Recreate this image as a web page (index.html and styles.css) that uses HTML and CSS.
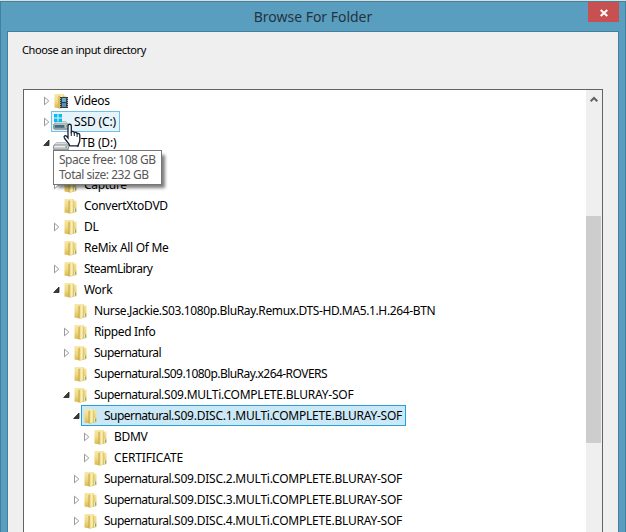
FILE: index.html
```
<!DOCTYPE html>
<html lang="en">
<head>
<meta charset="utf-8">
<title>Browse For Folder</title>
<link rel="stylesheet" href="styles.css">
</head>
<body>
<svg class="defs" aria-hidden="true">
  <linearGradient id="gold" x1="0" x2="0" y1="0" y2="1"><stop offset="0" stop-color="#f8e9a8"/><stop offset=".5" stop-color="#efd983"/><stop offset="1" stop-color="#d8b84c"/></linearGradient>
  <linearGradient id="flap" x1="0" x2="1"><stop offset="0" stop-color="#e6cb6c"/><stop offset=".6" stop-color="#fbf1c0"/><stop offset="1" stop-color="#e9d27b"/></linearGradient>
  <linearGradient id="metal" x1="0" x2="0" y1="0" y2="1"><stop offset="0" stop-color="#f4f4f4"/><stop offset="1" stop-color="#9fa3a6"/></linearGradient>
  <symbol id="folder" viewBox="0 0 16 16">
    <path d="M1.5 1h9v1.5h3V14l-6 1.5-6-1z" fill="url(#gold)"/>
    <path d="M6 2.5L10.5 1v13.3L6 15.5z" fill="url(#flap)"/>
    <path d="M6 3v12.3" stroke="#c5a23d" stroke-width=".9"/>
    <path d="M10.8 3v11" stroke="#d1b355" stroke-width=".6"/>
    <path d="M12.6 10.5v3" stroke="#4f9dab"/><path d="M11.7 10v4" stroke="#fff6c9" stroke-width=".8"/>
  </symbol>
  <symbol id="video" viewBox="0 0 16 16">
    <use href="#folder" width="16" height="16"/>
    <path d="M7 4h8v11H7z" fill="#343b42"/><path d="M9 5h4v4H9z" fill="#62aed2"/><path d="M9 10h4v4H9z" fill="#578fb3"/>
    <path d="M7.6 5v10M14.4 5v10" stroke="#c8cacb" stroke-width=".8" stroke-dasharray="1 1"/>
  </symbol>
  <symbol id="drive" viewBox="0 0 16 16">
    <path d="M3.5 7.5h9l3 3H.5z" fill="#d9dcde" stroke="#a2a6a8" stroke-width=".6"/>
    <rect x=".5" y="10" width="15" height="5.2" rx="1.5" fill="url(#metal)" stroke="#74797c" stroke-width=".8"/>
    <path d="M2 11.5h10" stroke="#eee"/><path d="M13.2 11v2" stroke="#4fa853"/>
  </symbol>
  <symbol id="system" viewBox="0 0 16 16">
    <use href="#drive" width="16" height="16"/><path d="M1.5 11h10v2.8h-10z" fill="#377182"/>
    <path d="M1 0h3.5v3.5H1zM5.5 0H9v3.5H5.5zM1 4.5h3.5V8H1zM5.5 4.5H9V8H5.5z" fill="#08baf2"/>
  </symbol>
  <symbol id="closed" viewBox="0 0 8 10"><path d="M1.5 1.2v7.6L5.8 5z" fill="#fff" stroke="#999"/></symbol>
  <symbol id="open" viewBox="0 0 8 10"><path d="M6 2v5.5H.7z" fill="#3b3b3b" stroke="#222" stroke-width=".8"/></symbol>
</svg>
<div class="dialog">
  <header class="titlebar"><h1>Browse For Folder</h1><button class="close" aria-label="Close"><svg width="8" height="8"><path d="M.7 1l6.6 6M7.3 1L.7 7" stroke="#fff" stroke-width="2"/></svg></button></header>
  <main class="panel">
    <p class="prompt">Choose an input directory</p>
    <div class="tree">
      <ul class="rows">
        <li class="row l0"><svg class="arrow"><use href="#closed"/></svg><span class="item"><svg class="icon"><use href="#video"/></svg><span class="t">Videos</span></span></li>
        <li class="row l0"><svg class="arrow"><use href="#closed"/></svg><span class="item hover"><svg class="icon"><use href="#system"/></svg><span class="t wide">SSD (C:)</span></span></li>
        <li class="row l0"><svg class="arrow"><use href="#open"/></svg><span class="item"><svg class="icon"><use href="#drive"/></svg><span class="t wide">1TB (D:)</span></span></li>
        <li class="row l1"></li>
        <li class="row l1"><svg class="arrow"><use href="#closed"/></svg><span class="item"><svg class="icon"><use href="#folder"/></svg><span class="t">Capture</span></span></li>
        <li class="row l1"><svg class="arrow"></svg><span class="item"><svg class="icon"><use href="#folder"/></svg><span class="t">ConvertXtoDVD</span></span></li>
        <li class="row l1"><svg class="arrow"><use href="#closed"/></svg><span class="item"><svg class="icon"><use href="#folder"/></svg><span class="t">DL</span></span></li>
        <li class="row l1"><svg class="arrow"></svg><span class="item"><svg class="icon"><use href="#folder"/></svg><span class="t">ReMix All Of Me</span></span></li>
        <li class="row l1"><svg class="arrow"><use href="#closed"/></svg><span class="item"><svg class="icon"><use href="#folder"/></svg><span class="t narrow">SteamLibrary</span></span></li>
        <li class="row l1"><svg class="arrow"><use href="#open"/></svg><span class="item"><svg class="icon"><use href="#folder"/></svg><span class="t">Work</span></span></li>
        <li class="row l2"><svg class="arrow"></svg><span class="item"><svg class="icon"><use href="#folder"/></svg><span class="t snug">Nurse.Jackie.S03.1080p.BluRay.Remux.DTS-HD.MA5.1.H.264-BTN</span></span></li>
        <li class="row l2"><svg class="arrow"><use href="#closed"/></svg><span class="item"><svg class="icon"><use href="#folder"/></svg><span class="t snug">Ripped Info</span></span></li>
        <li class="row l2"><svg class="arrow"><use href="#closed"/></svg><span class="item"><svg class="icon"><use href="#folder"/></svg><span class="t narrow">Supernatural</span></span></li>
        <li class="row l2"><svg class="arrow"></svg><span class="item"><svg class="icon"><use href="#folder"/></svg><span class="t narrow">Supernatural.S09.1080p.BluRay.x264-ROVERS</span></span></li>
        <li class="row l2"><svg class="arrow"><use href="#open"/></svg><span class="item"><svg class="icon"><use href="#folder"/></svg><span class="t"><span class="narrow">Supernatural</span><span class="release">.S09.MULTi.COMPLETE.BLURAY-SOF</span></span></span></li>
        <li class="row l3"><svg class="arrow"><use href="#open"/></svg><span class="item selected"><svg class="icon"><use href="#folder"/></svg><span class="t"><span class="narrow">Supernatural</span><span class="release">.S09.DISC.1.MULTi.COMPLETE.BLURAY-SOF</span></span></span></li>
        <li class="row l4"><svg class="arrow"><use href="#closed"/></svg><span class="item"><svg class="icon"><use href="#folder"/></svg><span class="t">BDMV</span></span></li>
        <li class="row l4"><svg class="arrow"><use href="#closed"/></svg><span class="item"><svg class="icon"><use href="#folder"/></svg><span class="t wide">CERTIFICATE</span></span></li>
        <li class="row l3"><svg class="arrow"><use href="#closed"/></svg><span class="item"><svg class="icon"><use href="#folder"/></svg><span class="t"><span class="narrow">Supernatural</span><span class="release">.S09.DISC.2.MULTi.COMPLETE.BLURAY-SOF</span></span></span></li>
        <li class="row l3"><svg class="arrow"><use href="#closed"/></svg><span class="item"><svg class="icon"><use href="#folder"/></svg><span class="t"><span class="narrow">Supernatural</span><span class="release">.S09.DISC.3.MULTi.COMPLETE.BLURAY-SOF</span></span></span></li>
        <li class="row l3"><svg class="arrow"><use href="#closed"/></svg><span class="item"><svg class="icon"><use href="#folder"/></svg><span class="t"><span class="narrow">Supernatural</span><span class="release">.S09.DISC.4.MULTi.COMPLETE.BLURAY-SOF</span></span></span></li>
      </ul>
      <div class="scrollbar"><svg class="up" width="8" height="7"><path d="M.7 5.3L4 2l3.3 3.3" fill="none" stroke="#606060" stroke-width="2"/></svg><div class="thumb"></div></div>
    </div>
  </main>
</div>
<div class="tooltip">Space free: 108 GB<br>Total size: 232 GB</div>
<svg class="cursor" width="20" height="25" viewBox="0 0 19 25"><path d="M5.5 15V3.2C5.5.6 8.8.6 8.8 3.2V9c1-1.1 2.8-.7 3 .7 1-.8 2.5-.3 2.8.9 1.3-.6 2.7.1 2.7 1.7v4.9c0 2.1-1.3 3.4-1.8 5.6H7.2c-.5-2.5-4.3-5.4-5.5-8.3-.6-1.7 1.3-2.4 2.3-1.3z" fill="#fff" stroke="#162034" stroke-width="1.3"/><path d="M8.8 9v4M11.8 9.7V13M14.6 10.6V14" stroke="#162034"/></svg>
</body>
</html>
```
FILE: styles.css
```
* { box-sizing: border-box; }
body { margin: 0; width: 626px; height: 532px; overflow: hidden; padding-top: 1px; background: #dcded8; font-family: "Noto Sans", "Open Sans", sans-serif; font-size: 12px; color: #000; }
.defs { position: absolute; width: 0; height: 0; }
.dialog { height: 531px; padding: 0 6px; background: #5a9ebf; border: 1px solid #41819f; border-width: 1px 1px 0; display: flex; flex-direction: column; }
.titlebar { flex: none; display: flex; justify-content: flex-end; height: 29px; padding-left: 31px; }
.titlebar h1 { flex: 1; margin: 0; font-size: 14px; line-height: 29px; font-weight: 400; text-align: center; color: #24333d; letter-spacing: -.02px; }
.close { width: 31px; height: 20px; padding: 2px 0 0; border: 0; background: #c75050; display: flex; align-items: center; justify-content: center; }
.panel { flex: 1; border: 1px solid #427f9f; border-bottom: 0; background: #efefef; padding: 0 15px; display: flex; flex-direction: column; min-height: 0; }
.prompt { flex: none; margin: 0 0 0 -1px; height: 57px; padding-top: 10px; font-size: 11px; line-height: 16px; letter-spacing: -.38px; }
.tree { flex: 1; min-height: 0; display: flex; border: 1px solid #636363; border-bottom: 0; background: #fff; overflow: hidden; }
.rows { flex: 1; min-width: 0; margin: 0; padding: 0; list-style: none; }
.row { display: flex; height: 21px; align-items: center; }
.l0 { padding-left: 19px; }
.l1 { padding-left: 29px; }
.l2 { padding-left: 39px; }
.l3 { padding-left: 49px; }
.l4 { padding-left: 59px; }
.arrow { flex: none; width: 8px; height: 10px; }
.item { display: flex; align-items: center; height: 21px; border: 1px solid transparent; padding: 0 3px 0 1px; }
.hover { background: #e5f3fb; border-color: #70c0e7; }
.selected { background: #cbe8f6; border-color: #26a0da; }
.icon { flex: none; width: 16px; height: 16px; margin-right: 5px; }
.t { white-space: nowrap; line-height: 19px; letter-spacing: -.3px; }
.wide { letter-spacing: -.14px; }
.snug { letter-spacing: -.37px; }
.narrow { letter-spacing: -.54px; }
.release { letter-spacing: -.23px; }
.scrollbar { flex: none; width: 16px; background: #efefef; padding: 6px 1px 0 0; display: flex; flex-direction: column; }
.up { align-self: center; }
.thumb { height: 227px; margin-top: 113px; background: #cdcdcd; }
.tooltip { position: absolute; left: 53px; top: 150px; width: 109px; height: 35px; border: 1px solid #767676; background: #fff; color: #575757; padding: 1px 5px; line-height: 15px; letter-spacing: -.48px; white-space: nowrap; box-shadow: 4px 4px 3px -1px rgba(0,0,0,.5); }
.cursor { position: absolute; left: 62px; top: 123px; }
```
